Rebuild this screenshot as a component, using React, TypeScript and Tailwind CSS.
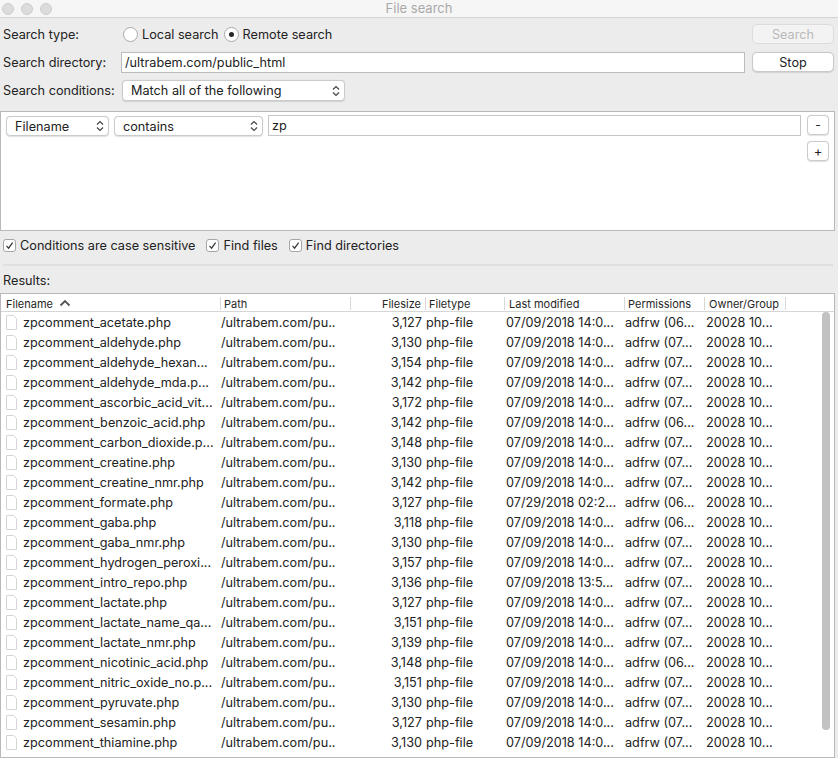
import React from 'react';

type Row = [string, string, string, string];

const ROWS: Row[] = [
  ['zpcomment_acetate.php', '3,127', '07/09/2018 14:0...', 'adfrw (06...'],
  ['zpcomment_aldehyde.php', '3,130', '07/09/2018 14:0...', 'adfrw (07...'],
  ['zpcomment_aldehyde_hexan...', '3,154', '07/09/2018 14:0...', 'adfrw (07...'],
  ['zpcomment_aldehyde_mda.p...', '3,142', '07/09/2018 14:0...', 'adfrw (07...'],
  ['zpcomment_ascorbic_acid_vit...', '3,172', '07/09/2018 14:0...', 'adfrw (07...'],
  ['zpcomment_benzoic_acid.php', '3,142', '07/09/2018 14:0...', 'adfrw (06...'],
  ['zpcomment_carbon_dioxide.p...', '3,148', '07/09/2018 14:0...', 'adfrw (07...'],
  ['zpcomment_creatine.php', '3,130', '07/09/2018 14:0...', 'adfrw (07...'],
  ['zpcomment_creatine_nmr.php', '3,142', '07/09/2018 14:0...', 'adfrw (07...'],
  ['zpcomment_formate.php', '3,127', '07/29/2018 02:2...', 'adfrw (06...'],
  ['zpcomment_gaba.php', '3,118', '07/09/2018 14:0...', 'adfrw (06...'],
  ['zpcomment_gaba_nmr.php', '3,130', '07/09/2018 14:0...', 'adfrw (07...'],
  ['zpcomment_hydrogen_peroxi...', '3,157', '07/09/2018 14:0...', 'adfrw (07...'],
  ['zpcomment_intro_repo.php', '3,136', '07/09/2018 13:5...', 'adfrw (07...'],
  ['zpcomment_lactate.php', '3,127', '07/09/2018 14:0...', 'adfrw (07...'],
  ['zpcomment_lactate_name_qa...', '3,151', '07/09/2018 14:0...', 'adfrw (07...'],
  ['zpcomment_lactate_nmr.php', '3,139', '07/09/2018 14:0...', 'adfrw (07...'],
  ['zpcomment_nicotinic_acid.php', '3,148', '07/09/2018 14:0...', 'adfrw (06...'],
  ['zpcomment_nitric_oxide_no.p...', '3,151', '07/09/2018 14:0...', 'adfrw (07...'],
  ['zpcomment_pyruvate.php', '3,130', '07/09/2018 14:0...', 'adfrw (07...'],
  ['zpcomment_sesamin.php', '3,127', '07/09/2018 14:0...', 'adfrw (07...'],
  ['zpcomment_thiamine.php', '3,130', '07/09/2018 14:0...', 'adfrw (07...'],
];

const COLS = 'grid grid-cols-[220px_130px_75px_79px_120px_80px_81px]';

function UpDown() {
  return (
    <svg width="8" height="12" viewBox="0 0 8 12" className="shrink-0">
      <path d="M1 4.5 L4 1.5 L7 4.5 M1 7.5 L4 10.5 L7 7.5" fill="none" stroke="#444" strokeWidth="1.2" />
    </svg>
  );
}

function Select({ label, className }: { label: string; className: string }) {
  return (
    <div
      className={`flex items-center justify-between bg-white border border-[#cbcbcb] rounded-[4px] shadow-[0_0.5px_1px_rgba(0,0,0,0.12)] pl-[8px] pr-[4px] ${className}`}
    >
      <span className="pt-[2px]">{label}</span>
      <UpDown />
    </div>
  );
}

function Radio({ on }: { on?: boolean }) {
  return (
    <span className="w-[15px] h-[15px] rounded-full bg-white border border-[#a9a9a9] flex items-center justify-center shrink-0">
      {on && <span className="w-[5px] h-[5px] rounded-full bg-[#262626]" />}
    </span>
  );
}

function Check() {
  return (
    <span className="w-[13px] h-[13px] rounded-[3px] bg-white border border-[#a6a6a6] flex items-center justify-center shrink-0">
      <svg width="9" height="9" viewBox="0 0 9 9">
        <path d="M1.5 4.8 L3.6 7.2 L7.6 1.6" fill="none" stroke="#333" strokeWidth="1.2" />
      </svg>
    </span>
  );
}

function FileIcon() {
  return (
    <svg width="13" height="15" viewBox="0 0 13 15" className="shrink-0">
      <path d="M1.5 0.5 H8.5 L11.5 3.5 V14.5 H1.5 Z" fill="#fff" stroke="#d6d6d6" />
    </svg>
  );
}

function HeadCell({ label, className = '', children }: { label: string; className?: string; children?: React.ReactNode }) {
  return (
    <div className="flex items-center h-full">
      <div className={`flex-1 flex items-center min-w-0 ${className}`}>
        <span className="pt-[2px]">{label}</span>
        {children}
      </div>
      <span className="w-px h-[13px] bg-[#d9d9d9] shrink-0" />
    </div>
  );
}

export default function App() {
  return (
    <div className="w-[838px] h-[758px] bg-[#ececec] overflow-hidden flex flex-col text-[12.7px] text-[#222] [font-family:Inter,sans-serif] leading-none">
      {/* title bar */}
      <div className="h-[18px] shrink-0 bg-[#f6f6f6] border-b border-[#d4d4d4] grid grid-cols-[1fr_auto_1fr] items-center">
        <div className="flex items-center gap-[7px] pl-[2px]">
          <span className="w-[12px] h-[12px] rounded-full bg-[#dcdcdc] border border-[#cdcdcd]" />
          <span className="w-[12px] h-[12px] rounded-full bg-[#dcdcdc] border border-[#cdcdcd]" />
          <span className="w-[12px] h-[12px] rounded-full bg-[#dcdcdc] border border-[#cdcdcd]" />
        </div>
        <span className="text-[#a9a9a9] text-[13px]">File search</span>
        <div />
      </div>

      {/* search type */}
      <div className="mt-[6px] h-[20px] pl-[3px] pr-[4px] flex items-center">
        <span className="w-[118px] pt-[2px]">Search type:</span>
        <div className="ml-[2px] flex items-center">
          <Radio />
          <span className="ml-[4px] pt-[2px]">Local search</span>
          <span className="ml-[5px]"><Radio on /></span>
          <span className="ml-[4px] pt-[2px]">Remote search</span>
        </div>
        <div className="flex-1" />
        <button className="w-[82px] h-[20px] pt-[2px] rounded-[5px] border border-[#dcdcdc] bg-[#f3f3f3] text-[#b9b9b9]">Search</button>
      </div>

      {/* directory */}
      <div className="mt-[8px] h-[21px] pl-[3px] pr-[4px] flex items-start">
        <span className="w-[118px] self-center pt-[2px]">Search directory:</span>
        <div className="flex-1 h-[21px] pt-[2px] bg-white border border-[#bcbcbc] flex items-center pl-[3px]">/ultrabem.com/public_html</div>
        <button className="ml-[7px] w-[82px] h-[20px] pt-[2px] rounded-[5px] border border-[#c9c9c9] bg-white shadow-[0_0.5px_1px_rgba(0,0,0,0.12)]">Stop</button>
      </div>

      {/* conditions */}
      <div className="mt-[7px] h-[21px] pl-[3px] pr-[4px] flex items-center">
        <span className="w-[119px] pt-[2px]">Search conditions:</span>
        <Select label="Match all of the following" className="w-[223px] h-[21px]" />
      </div>

      {/* condition box */}
      <div className="mt-[10px] w-[835px] h-[120px] shrink-0 bg-white border border-[#b9b9b9] flex items-start pt-[3px] pl-[5px] pr-[5px]">
        <Select label="Filename" className="mt-[1px] w-[103px] h-[20px]" />
        <Select label="contains" className="ml-[5px] mt-[1px] w-[149px] h-[20px]" />
        <div className="ml-[5px] flex-1 h-[21px] pt-[2px] border border-[#c6c6c6] flex items-center pl-[3px]">zp</div>
        <div className="ml-[6px] flex flex-col gap-[6px]">
          <button className="w-[22px] h-[20px] rounded-[4px] border border-[#cbcbcb] bg-white shadow-[0_0.5px_1px_rgba(0,0,0,0.12)] text-[12px]">-</button>
          <button className="w-[22px] h-[20px] rounded-[4px] border border-[#cbcbcb] bg-white shadow-[0_0.5px_1px_rgba(0,0,0,0.12)] text-[13px]">+</button>
        </div>
      </div>

      {/* options */}
      <div className="mt-[6px] h-[16px] pl-[3px] flex items-center">
        <Check />
        <span className="ml-[4px] pt-[2px]">Conditions are case sensitive</span>
        <span className="ml-[11px]"><Check /></span>
        <span className="ml-[4px] pt-[2px]">Find files</span>
        <span className="ml-[11px]"><Check /></span>
        <span className="ml-[4px] pt-[2px]">Find directories</span>
      </div>

      <div className="mt-[11px] ml-[3px] w-[830px] h-[2px] bg-[#dfdfdf]" />

      <div className="mt-[7px] h-[14px] pt-[2px] pl-[3px] flex items-center">Results:</div>

      {/* results table */}
      <div className="mt-[6px] w-[835px] h-[465px] shrink-0 bg-white border border-[#b9b9b9] flex flex-col overflow-hidden">
        <div className={`${COLS} h-[18px] shrink-0 border-b border-[#d6d6d6] text-[11px] text-[#262626] pt-[1px]`}>
          <HeadCell label="Filename" className="pl-[5px]">
            <svg width="12" height="8" viewBox="0 0 12 8" className="ml-[6px]">
              <path d="M1.5 6.5 L6 2 L10.5 6.5" fill="none" stroke="#555" strokeWidth="1.8" />
            </svg>
          </HeadCell>
          <HeadCell label="Path" className="pl-[3px]" />
          <HeadCell label="Filesize" className="justify-end pr-[4px]" />
          <HeadCell label="Filetype" className="pl-[3px]" />
          <HeadCell label="Last modified" className="pl-[4px]" />
          <HeadCell label="Permissions" className="pl-[3px]" />
          <HeadCell label="Owner/Group" className="pl-[4px]" />
        </div>
        <div className="flex flex-1 min-h-0">
          <div className="flex-1">
            {ROWS.map(([name, size, mod, perm]) => (
              <div key={name} className={`${COLS} h-[20px] items-center`}>
                <div className="flex items-center pl-[4px]">
                  <FileIcon />
                  <span className="ml-[5px] pt-[2px] whitespace-nowrap">{name}</span>
                </div>
                <span className="pt-[2px] whitespace-nowrap">/ultrabem.com/pu..</span>
                <span className="pt-[2px] text-right pr-[4px]">{size}</span>
                <span className="pt-[2px]">php-file</span>
                <span className="pt-[2px] pl-[1px] whitespace-nowrap">{mod}</span>
                <span className="pt-[2px] whitespace-nowrap">{perm}</span>
                <span className="pt-[2px] pl-[1px] whitespace-nowrap">20028 10...</span>
              </div>
            ))}
          </div>
          <div className="w-[14px] shrink-0 pl-[2px]">
            <div className="w-[8px] h-[418px] rounded-full bg-[#c2c2c2]" />
          </div>
        </div>
      </div>
    </div>
  );
}
